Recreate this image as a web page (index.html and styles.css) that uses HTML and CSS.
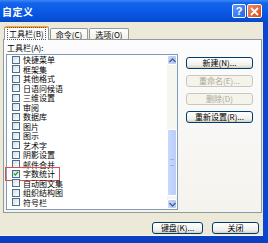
FILE: index.html
```html
<!DOCTYPE html>
<html lang="zh-CN">
<head>
    <meta charset="UTF-8">
    <title>自定义</title>
    <link rel="stylesheet" href="styles.css">
</head>
<body>
    <div class="window">
        <div class="titlebar">
            <span class="title">自定义</span>
            <span class="caption-btn help">?</span>
            <span class="caption-btn close">
                <svg width="9" height="9" viewBox="0 0 9 9"><path d="M1 1 L8 8 M8 1 L1 8" stroke="#fff" stroke-width="1.8"/></svg>
            </span>
        </div>

        <div class="frame">
            <!-- tabs -->
            <div class="tabs">
                <div class="tab active"><span class="focus">工具栏(B)</span></div>
                <div class="tab">命令(C)</div>
                <div class="tab">选项(O)</div>
            </div>

            <div class="panel">
                <div class="panel-left">
                    <div class="label">工具栏(A):</div>
                    <div class="listbox">
                        <ul class="items">
                            <li><span class="item"><i class="check"></i>快捷菜单</span></li>
                            <li><span class="item"><i class="check"></i>框架集</span></li>
                            <li><span class="item"><i class="check"></i>其他格式</span></li>
                            <li><span class="item"><i class="check"></i>日语问候语</span></li>
                            <li><span class="item"><i class="check"></i>三维设置</span></li>
                            <li><span class="item"><i class="check"></i>审阅</span></li>
                            <li><span class="item"><i class="check"></i>数据库</span></li>
                            <li><span class="item"><i class="check"></i>图片</span></li>
                            <li><span class="item"><i class="check"></i>图示</span></li>
                            <li><span class="item"><i class="check"></i>艺术字</span></li>
                            <li><span class="item"><i class="check"></i>阴影设置</span></li>
                            <li><span class="item"><i class="check"></i>邮件合并</span></li>
                            <li><span class="item marked"><i class="check on">
                                <svg width="7" height="7" viewBox="0 0 7 7"><path d="M1 3.5 L2.8 5.3 L6 1.5" stroke="#21a121" stroke-width="1.5" fill="none"/></svg>
                            </i>字数统计</span></li>
                            <li><span class="item"><i class="check"></i>自动图文集</span></li>
                            <li><span class="item"><i class="check"></i>组织结构图</span></li>
                            <li><span class="item"><i class="check"></i>符号栏</span></li>
                        </ul>
                        <div class="scrollbar">
                            <div class="arrow">
                                <svg width="7" height="5" viewBox="0 0 7 5"><path d="M0.5 4 L3.5 1 L6.5 4" stroke="#4d6185" stroke-width="1.4" fill="none"/></svg>
                            </div>
                            <div class="track"><div class="thumb"><span></span></div></div>
                            <div class="arrow">
                                <svg width="7" height="5" viewBox="0 0 7 5"><path d="M0.5 1 L3.5 4 L6.5 1" stroke="#4d6185" stroke-width="1.4" fill="none"/></svg>
                            </div>
                        </div>
                    </div>
                </div>

                <div class="side-buttons">
                    <button class="btn">新建(N)...</button>
                    <button class="btn" disabled>重命名(E)...</button>
                    <button class="btn" disabled>删除(D)</button>
                    <button class="btn">重新设置(R)...</button>
                </div>
            </div>

            <div class="footer">
                <button class="btn keyboard">键盘(K)...</button>
                <button class="btn closebtn">关闭</button>
            </div>
        </div>
    </div>
</body>
</html>
```

FILE: styles.css
```css
body {
    margin: 0;
    font-family: "Noto Sans CJK SC", "Liberation Sans", sans-serif;
    font-size: 8px;
    color: #000;
    background: #0841d0;
}
.window {
    width: 268px;
    height: 243px;
    display: flex;
    flex-direction: column;
    overflow: hidden;
}

/* title bar */
.titlebar {
    height: 22px;
    flex: none;
    display: flex;
    align-items: center;
    padding: 0 6px 0 2px;
    background: linear-gradient(#3b86f7 0, #1565ea 3px, #0a5ae6 50%, #0650d8 85%, #0a47c4 100%);
}
.title {
    color: #fff;
    font-size: 10px;
    font-weight: bold;
    letter-spacing: 0.5px;
    flex: 1;
}
.caption-btn {
    width: 12px;
    height: 12px;
    border: 1px solid #fff;
    border-radius: 2px;
    display: flex;
    align-items: center;
    justify-content: center;
    color: #fff;
    font-family: "Liberation Sans", sans-serif;
    font-weight: bold;
    font-size: 11px;
}
.help {
    background: linear-gradient(135deg, #5d9cff, #2463e8);
    margin-right: 1px;
}
.close {
    width: 13px;
    background: linear-gradient(135deg, #f08a60, #d64a1c);
}

/* dialog body */
.frame {
    flex: 1;
    display: flex;
    flex-direction: column;
    background: #ece9d8;
    border-right: 5px solid #0a46cf;
    border-bottom: 7px solid #0a3fc2;
    box-shadow: inset 0 -1px 0 #f6f5ef;
}
.tabs {
    display: flex;
    align-items: flex-end;
    gap: 1px;
    margin: 3px 0 -1px 4px;
    height: 15px;
}
.tab {
    height: 11px;
    padding: 0 5px;
    line-height: 11px;
    border: 1px solid #919b9c;
    border-bottom: none;
    border-radius: 2px 2px 0 0;
    background: linear-gradient(#fefefe, #f1efe6);
}
.tab.active {
    position: relative;
    z-index: 1;
    height: 12px;
    line-height: 12px;
    padding: 0 3px;
    background: #fcfcfe;
    border-top: 2px solid #f4a534;
}
.focus {
    outline: 1px dotted #555;
    padding: 0 1px;
}

.panel {
    width: 257px;
    height: 172px;
    margin-left: 3px;
    border: 1px solid #919b9c;
    background: linear-gradient(#fcfcfe, #f4f3ee);
    display: flex;
}
.panel-left {
    padding: 3px 0 0 2px;
}
.label {
    height: 10px;
    line-height: 9px;
    margin: 0 0 1px 1px;
}
.listbox {
    width: 170px;
    height: 154px;
    border: 1px solid #7f9db9;
    background: #fff;
    display: flex;
}
.items {
    list-style: none;
    margin: 0;
    padding: 0;
    flex: 1;
}
.items li {
    height: 9.5px;
    line-height: 9.5px;
}
.item {
    display: inline-flex;
    align-items: center;
    gap: 3px;
    padding-left: 5px;
}
.item.marked {
    outline: 1px solid #d9504c;
    outline-offset: 1px;
    margin-left: 0;
    padding-right: 3px;
}
.check {
    width: 6px;
    height: 6px;
    border: 1px solid #4a6f97;
    background: linear-gradient(135deg, #dcdcd6, #fff);
    display: flex;
    align-items: center;
    justify-content: center;
}

/* scrollbar */
.scrollbar {
    width: 10px;
    display: flex;
    flex-direction: column;
    background: #f6f6f1;
}
.arrow {
    height: 10px;
    background: linear-gradient(90deg, #c4d5fc, #b3c8f5);
    border: 1px solid #fff;
    box-sizing: border-box;
    border-radius: 2px;
    display: flex;
    align-items: center;
    justify-content: center;
}
.track {
    flex: 1;
    display: flex;
    flex-direction: column;
}
.thumb {
    height: 65px;
    margin-top: 64px;
    background: linear-gradient(90deg, #c9d8fd, #b9cdf8);
    border: 1px solid #fff;
    border-radius: 2px;
    display: flex;
    align-items: center;
    justify-content: center;
}
.thumb span {
    width: 4px;
    height: 5px;
    border-top: 1px solid #9cb1e6;
    border-bottom: 1px solid #9cb1e6;
}

/* buttons */
.btn {
    font-family: inherit;
    font-size: 8px;
    color: #000;
    height: 12px;
    padding: 0;
    line-height: 10px;
    border: 1px solid #003c74;
    border-radius: 3px;
    background: linear-gradient(#ffffff, #f0f0ea 70%, #d6d0c5);
}
.btn:disabled {
    color: #aca899;
    border-color: #c9c7ba;
    background: #f5f4ea;
}
.side-buttons {
    display: flex;
    flex-direction: column;
    gap: 6px;
    margin: 17px 0 0 8px;
}
.side-buttons .btn {
    width: 67px;
}
.footer {
    display: flex;
    justify-content: flex-end;
    gap: 9px;
    padding: 9px 4px 0 0;
}
.keyboard {
    width: 51px;
}
.closebtn {
    width: 47px;
}
```
